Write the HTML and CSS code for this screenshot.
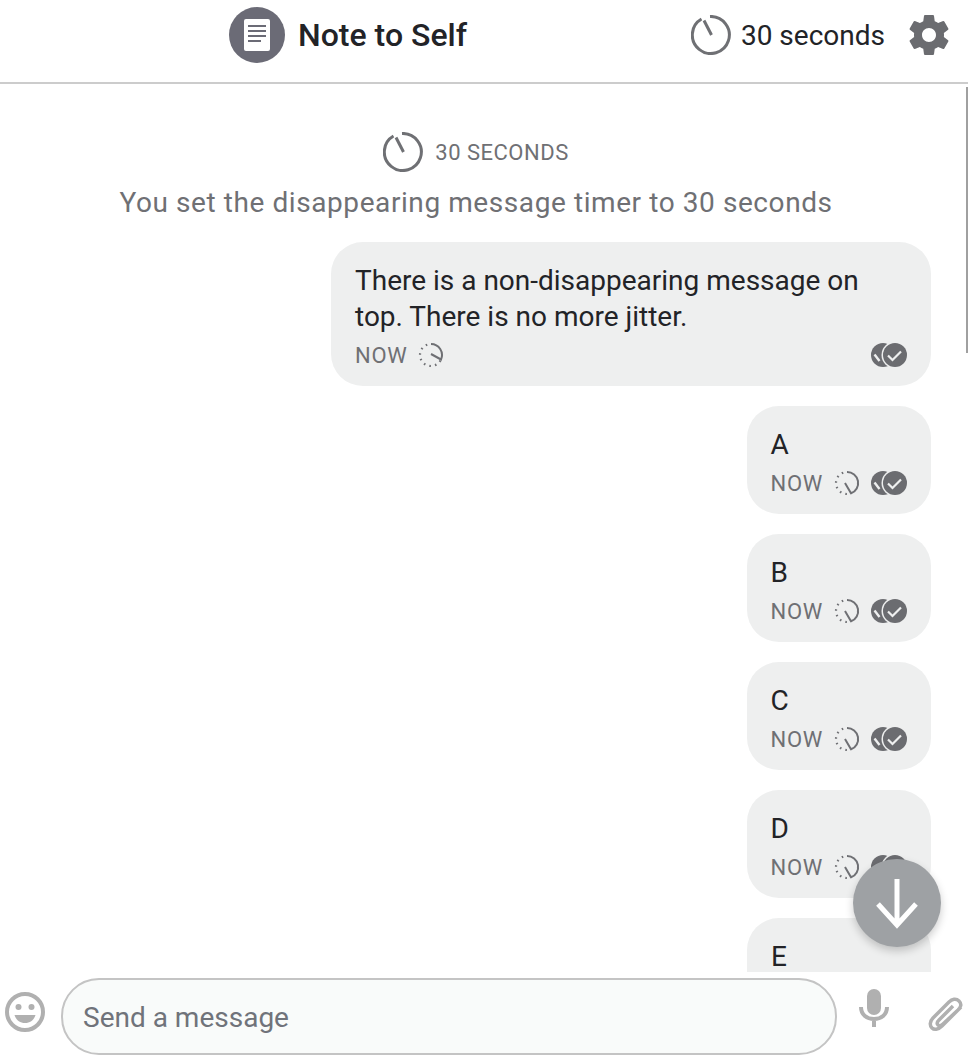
FILE: index.html
```html
<!DOCTYPE html>
<html lang="en">

<head>
    <meta charset="UTF-8">
    <title>Note to Self</title>
    <link rel="stylesheet" href="styles.css">
</head>

<body>
    <svg class="sprite" width="0" height="0">
        <symbol id="timer-big" viewBox="0 0 40 40">
            <path d="M19 1.5A18.5 18.5 0 1 1 10.5 4" fill="none" stroke="currentColor" stroke-width="3" />
            <path d="M20.5 20L13 5.5" fill="none" stroke="currentColor" stroke-width="3" />
        </symbol>
        <symbol id="timer-a" viewBox="0 0 26 26">
            <circle cx="13" cy="13" r="11" fill="none" stroke="currentColor" stroke-width="2.2" stroke-dasharray="1.6 4.16" />
            <path d="M11 2.2A11 11 0 0 1 23.5 16.5" fill="none" stroke="#eeefef" stroke-width="4" />
            <path d="M13 2A11 11 0 0 1 23 17.5L13 12" fill="none" stroke="currentColor" stroke-width="2" />
        </symbol>
        <symbol id="timer-b" viewBox="0 0 26 26">
            <circle cx="13" cy="13" r="11" fill="none" stroke="currentColor" stroke-width="2.2" stroke-dasharray="1.6 4.16" />
            <path d="M12 2.1A11 11 0 1 1 15 24" fill="none" stroke="#eeefef" stroke-width="4" />
            <path d="M13 2A11 11 0 0 1 17 23.3L11 13" fill="none" stroke="currentColor" stroke-width="2" />
        </symbol>
        <symbol id="delivered" viewBox="0 0 36 24">
            <circle cx="12" cy="12" r="12" fill="currentColor" />
            <path d="M3.5 11.5l5 6.5" fill="none" stroke="#eeefef" stroke-width="2.4" />
            <circle cx="24" cy="12" r="13.5" fill="#eeefef" />
            <circle cx="24" cy="12" r="12" fill="currentColor" />
            <path d="M17 12.5l4.5 4.5 8.5-8.5" fill="none" stroke="#eeefef" stroke-width="2.2" />
        </symbol>
    </svg>

    <div class="app">
        <header class="title-bar">
            <div class="avatar">
                <svg class="avatar-icon" viewBox="0 0 26 32">
                    <rect width="26" height="32" rx="2" fill="#fff" />
                    <path d="M4 7h18M4 12h18M4 17h18M4 22h13" stroke="#6b6b76" stroke-width="2" />
                </svg>
            </div>
            <h1 class="title">Note to Self</h1>
            <div class="title-timer">
                <svg class="timer-big"><use href="#timer-big" /></svg>
                <span>30 seconds</span>
            </div>
            <svg class="gear" viewBox="0 0 24 24">
                <path fill="currentColor" d="M19.43 12.98c.04-.32.07-.64.07-.98s-.03-.66-.07-.98l2.11-1.65c.19-.15.24-.42.12-.64l-2-3.46c-.12-.22-.39-.3-.61-.22l-2.49 1c-.52-.4-1.08-.73-1.69-.98l-.38-2.65C14.46 2.18 14.25 2 14 2h-4c-.25 0-.46.18-.49.42l-.38 2.65c-.61.25-1.17.59-1.69.98l-2.49-1c-.23-.09-.49 0-.61.22l-2 3.46c-.13.22-.07.49.12.64l2.11 1.65c-.04.32-.07.65-.07.98s.03.66.07.98l-2.11 1.65c-.19.15-.24.42-.12.64l2 3.46c.12.22.39.3.61.22l2.49-1c.52.4 1.08.73 1.69.98l.38 2.65c.03.24.24.42.49.42h4c.25 0 .46-.18.49-.42l.38-2.65c.61-.25 1.17-.59 1.69-.98l2.49 1c.23.09.49 0 .61-.22l2-3.46c.12-.22.07-.49-.12-.64l-2.11-1.65zM12 15.5c-1.93 0-3.5-1.57-3.5-3.5s1.57-3.5 3.5-3.5 3.5 1.57 3.5 3.5-1.57 3.5-3.5 3.5z" />
            </svg>
        </header>

        <main class="messages">
            <div class="scroll-thumb"></div>
            <div class="notice">
                <div class="notice-top">
                    <svg class="timer-big"><use href="#timer-big" /></svg>
                    <span>30 SECONDS</span>
                </div>
                <p class="notice-text">You set the disappearing message timer to 30 seconds</p>
            </div>

            <div class="bubble">
                <p class="bubble-text">There is a non-disappearing message on top. There is no more jitter.</p>
                <div class="meta">
                    <span>NOW</span>
                    <svg class="timer-small"><use href="#timer-a" /></svg>
                    <svg class="delivered"><use href="#delivered" /></svg>
                </div>
            </div>
            <div class="bubble">
                <p class="bubble-text">A</p>
                <div class="meta">
                    <span>NOW</span>
                    <svg class="timer-small"><use href="#timer-b" /></svg>
                    <svg class="delivered"><use href="#delivered" /></svg>
                </div>
            </div>
            <div class="bubble">
                <p class="bubble-text">B</p>
                <div class="meta">
                    <span>NOW</span>
                    <svg class="timer-small"><use href="#timer-b" /></svg>
                    <svg class="delivered"><use href="#delivered" /></svg>
                </div>
            </div>
            <div class="bubble">
                <p class="bubble-text">C</p>
                <div class="meta">
                    <span>NOW</span>
                    <svg class="timer-small"><use href="#timer-b" /></svg>
                    <svg class="delivered"><use href="#delivered" /></svg>
                </div>
            </div>
            <div class="bubble">
                <p class="bubble-text">D</p>
                <div class="meta">
                    <span>NOW</span>
                    <svg class="timer-small"><use href="#timer-b" /></svg>
                    <svg class="delivered"><use href="#delivered" /></svg>
                </div>
            </div>
            <div class="bubble bubble-last">
                <p class="bubble-text">E</p>
            </div>
        </main>

        <div class="scroll-down">
            <svg viewBox="0 0 48 52" width="48" height="52">
                <path d="M24 2V48M5 27L24 48L43 27" fill="none" stroke="#fff" stroke-width="5" />
            </svg>
        </div>

        <footer class="composer">
            <svg class="emoji" viewBox="0 0 40 40">
                <circle cx="20" cy="20" r="18" fill="none" stroke="currentColor" stroke-width="4" />
                <circle cx="13.5" cy="15" r="3" fill="currentColor" />
                <circle cx="26.5" cy="15" r="3" fill="currentColor" />
                <path d="M9.5 23H30.5C29 28 25 31 20 31S11 28 9.5 23Z" fill="currentColor" />
            </svg>
            <div class="input">Send a message</div>
            <svg class="mic" viewBox="0 0 30 40">
                <rect x="8" y="0" width="14" height="26" rx="7" fill="currentColor" />
                <path d="M2 18C2 26 8 30 15 30S28 26 28 18M15 30V38" fill="none" stroke="currentColor" stroke-width="4" />
            </svg>
            <svg class="clip" viewBox="0 0 36 36">
                <path d="M33 10L14 29C10 33 6 33 4 31S1 25 5 21L21 5C24 2 28 1 31 4S33 10 30 13L15 27C13 29 11 29 10 28S9 25 11 23L25 9" fill="none" stroke="currentColor" stroke-width="3.5" />
            </svg>
        </footer>
    </div>
</body>

</html>
```

FILE: styles.css
```css
body {
    margin: 0;
    background-color: #fff;
    font-family: Roboto, sans-serif;
    color: #222327;
}

.sprite {
    display: block;
    height: 0;
}

.app {
    position: relative;
    display: flex;
    flex-direction: column;
    height: 1060px;
    overflow: hidden;
}

.title-bar {
    display: flex;
    align-items: center;
    flex-shrink: 0;
    box-sizing: border-box;
    height: 84px;
    padding: 0 15px 12px 229px;
    border-bottom: 2px solid #ccc;
}

.avatar {
    display: flex;
    align-items: center;
    justify-content: center;
    width: 56px;
    height: 56px;
    border-radius: 50%;
    background-color: #6b6b76;
}

.avatar-icon {
    width: 26px;
    height: 32px;
}

.title {
    margin: 0 0 0 13px;
    font-size: 32px;
    font-weight: 500;
}

.title-timer {
    display: flex;
    align-items: center;
    gap: 10px;
    margin-left: auto;
    font-size: 28px;
}

.timer-big {
    width: 40px;
    height: 40px;
    color: #6f7074;
}

.gear {
    width: 48px;
    height: 48px;
    margin-left: 20px;
    color: #6b6c70;
}

.messages {
    position: relative;
    flex: 1;
    min-height: 0;
    overflow: hidden;
    padding: 48px 37px 0 0;
}

.scroll-thumb {
    position: absolute;
    top: 3px;
    right: 0;
    width: 2px;
    height: 266px;
    background-color: #a0a0a0;
}

.notice {
    text-align: center;
    width: 952px;
    margin-bottom: 21px;
    color: #6f7074;
}

.notice-top {
    display: flex;
    align-items: center;
    justify-content: center;
    gap: 12px;
    font-size: 22px;
    letter-spacing: 0.5px;
}

.notice-text {
    margin: 13px 0 0;
    font-size: 28px;
    line-height: 36px;
    letter-spacing: 0.58px;
}

.bubble {
    box-sizing: border-box;
    width: fit-content;
    max-width: 600px;
    margin: 0 0 20px auto;
    padding: 21px 24px 11px;
    border-radius: 32px;
    background-color: #eeefef;
}

.bubble-last {
    min-width: 184px;
    min-height: 108px;
}

.bubble-text {
    margin: 0;
    font-size: 28px;
    line-height: 36px;
}

.meta {
    display: flex;
    align-items: center;
    height: 40px;
    font-size: 22px;
    letter-spacing: 0.7px;
    color: #6f7074;
}

.timer-small {
    width: 26px;
    height: 26px;
    margin-left: 11px;
}

.delivered {
    width: 36px;
    height: 24px;
    margin-left: auto;
    padding-left: 11px;
    color: #6b6c70;
    box-sizing: content-box;
}

.scroll-down {
    position: absolute;
    left: 853px;
    top: 859px;
    display: flex;
    align-items: center;
    justify-content: center;
    width: 88px;
    height: 88px;
    border-radius: 50%;
    background-color: #9ea1a4;
    box-shadow: 0 4px 8px rgba(0, 0, 0, 0.2);
}

.composer {
    display: flex;
    align-items: center;
    flex-shrink: 0;
    box-sizing: border-box;
    height: 88px;
    padding: 6px 0 5px 5px;
    color: #b0b0b0;
}

.emoji {
    width: 40px;
    height: 40px;
    margin-bottom: 9px;
}

.input {
    display: flex;
    align-items: center;
    box-sizing: border-box;
    width: 776px;
    height: 77px;
    margin-left: 16px;
    padding: 2px 0 0 20px;
    border: 2px solid #c4c4c4;
    border-radius: 38px;
    background-color: #f9fbfa;
    font-size: 28px;
    color: #70737a;
}

.mic {
    width: 30px;
    height: 40px;
    margin: 0 0 15px 22px;
}

.clip {
    width: 36px;
    height: 36px;
    margin: 0 0 4px 39px;
}
```
